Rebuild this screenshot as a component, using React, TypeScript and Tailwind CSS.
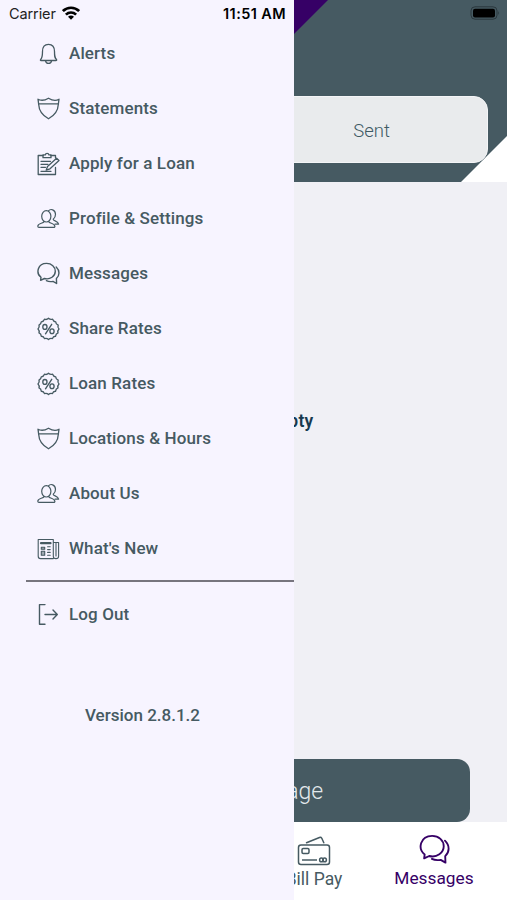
import type { ReactNode } from 'react'

function Icon({ size = 24, stroke = 1.3, children }: { size?: number; stroke?: number; children: ReactNode }) {
  return (
    <svg
      width={size}
      height={size}
      viewBox="0 0 24 24"
      fill="none"
      stroke="currentColor"
      strokeWidth={stroke}
      strokeLinecap="round"
      strokeLinejoin="round"
      className="shrink-0"
    >
      {children}
    </svg>
  )
}

const BellIcon = () => (
  <Icon>
    <path d="M4.6 17.6C6.4 16 6.5 14.5 6.5 9.5C6.5 5 8.5 2.3 12.5 2.3S18.5 5 18.5 9.5C18.5 14.5 18.6 16 20.6 17.6C20.8 18.2 20.5 18.5 20 18.5H5C4.4 18.5 4.2 18.1 4.6 17.6Z" />
    <path d="M9.6 18.8C9.8 20.4 11 21.3 12.5 21.3S15.3 20.4 15.5 18.8" />
  </Icon>
)

const ShieldIcon = () => (
  <Icon>
    <path d="M2 2.2C4.3 3.5 8.5 3.6 12.5 1.2C16.5 3.6 20.8 3.5 23 2.2L22.3 7.5C22 14.5 17.5 19 12.5 21.8C7.5 19 3 14.5 2.7 7.5Z" />
    <path d="M2.7 6.8H22.3" />
  </Icon>
)

const ClipboardIcon = () => (
  <Icon stroke={1.3}>
    <path d="M7.2 3.5H2.2V22.5H19.5V15.5M14.8 3.5H19.5V6" />
    <path d="M7 5.7V2.8H9.3C9.6 .8 12.6 .8 12.9 2.8H15V5.7Z" />
    <path d="M5 9.3H14.5M5 12.3H12M5 15.3H9.5M5 19.3H15" />
    <path d="M11.5 14.5L20.6 6.3L23 8.5L14 16.8L10.2 18.2Z" />
  </Icon>
)

const PeopleIcon = () => (
  <Icon stroke={1.2}>
    <ellipse cx="10.3" cy="9.3" rx="4.6" ry="5.7" />
    <path d="M8 14.5C7.5 16.8 2 15.8 1.8 19.2Q1.8 20.4 3 20.4H17.8Q19 20.4 18.8 19.2C18.4 15.8 13.2 16.8 12.7 14.5" />
    <path d="M12.5 3.8C14.5 1.5 19.3 2.3 19.5 7.3C19.5 9.7 18.5 11.4 17.2 12.3C17.2 14.2 22 13.6 22.6 17.2H19" />
  </Icon>
)

const ChatIcon = ({ size, stroke = 1.4 }: { size?: number; stroke?: number }) => (
  <Icon size={size} stroke={stroke}>
    <path d="M5 15.3C-.4 11.2 1.6 1.4 10.6 1.4C15.6 1.4 19.3 4.8 19.3 9.2C19.3 14.1 14.2 18 8.4 16.5L4.6 18.3Z" />
    <path d="M20.2 5C24 8.6 23.7 13.6 20.4 16.6L20.6 21.5L17 19.4C14.4 19.9 12.2 19.6 10.4 18.7" />
  </Icon>
)

const RatesIcon = () => (
  <Icon stroke={1.35}>
    <path d="M12.5 1.3Q14.3 2.9 16.6 2.2Q17.4 4.4 19.7 4.8Q19.7 7.1 22.2 8.2Q21.2 10.4 23 12Q21.2 13.8 22 15.9Q19.8 16.8 19.5 19.3Q17.2 19.2 16.4 21.6Q14.3 20.8 12.5 22.5Q10.8 20.8 8.5 21.6Q7.7 19.2 5.3 19.3Q5.2 16.8 3 15.9Q3.8 13.8 2 12Q3.8 10.2 3 8.1Q5.2 7 5.3 4.8Q7.6 4.5 8.5 2.2Q10.8 3 12.5 1.3Z" />
    <path d="M15.7 7.3L9.5 16.8" />
    <ellipse cx="8.9" cy="9.9" rx="2.1" ry="2.4" />
    <ellipse cx="16" cy="14.2" rx="2.1" ry="2.4" />
  </Icon>
)

const NewsIcon = () => (
  <Icon stroke={1.1}>
    <path d="M17.3 21.6H4.5C3 21.6 2.2 20.8 2.2 19.3V2.5H17.3V19.2C17.3 22.4 22.6 22.4 22.6 19.2V5.5H17.3M20 5.5V19" />
    <path d="M5 6.2H14.5" strokeWidth="2.2" />
    <path d="M5.3 10.2H8.7V12.2H5.3ZM5.3 14.3H8.7V18.3H5.3Z" fill="currentColor" fillOpacity=".5" />
    <path d="M11.6 9.8H14.2M11.6 12.6H14.2M11.6 15.4H14.2M11.6 18.3H14.2" />
  </Icon>
)

const LogOutIcon = () => (
  <Icon stroke={1.4}>
    <path d="M9 1.6H3.5V21.2H9" />
    <path d="M9 11.5H21M17 7L21.3 11.5L17 16" />
  </Icon>
)

const menu = [
  { icon: BellIcon, label: 'Alerts' },
  { icon: ShieldIcon, label: 'Statements' },
  { icon: ClipboardIcon, label: 'Apply for a Loan' },
  { icon: PeopleIcon, label: 'Profile & Settings' },
  { icon: ChatIcon, label: 'Messages' },
  { icon: RatesIcon, label: 'Share Rates' },
  { icon: RatesIcon, label: 'Loan Rates' },
  { icon: ShieldIcon, label: 'Locations & Hours' },
  { icon: PeopleIcon, label: 'About Us' },
  { icon: NewsIcon, label: "What's New" },
]

function StatusBar() {
  return (
    <div className="absolute inset-x-0 top-0 flex h-7 items-center text-[15px] text-black font-[Inter,sans-serif]">
      <span className="ml-[9px] w-[47px] text-[14.5px] tracking-[-0.1px] text-[#222]">Carrier</span>
      <svg width="18" height="14" viewBox="0 0 18 14" className="ml-[6px] -mt-[2px]" fill="none" stroke="#000" strokeWidth="2.7">
        <path d="M.9 5.1C5.5 .6 12.5 .6 17.1 5.1" />
        <path d="M3.9 8.6C6.8 5.8 11.2 5.8 14.1 8.6" />
        <path d="M9 13.7L6 10.7C7.7 9.2 10.3 9.2 12 10.7Z" fill="#000" stroke="none" />
      </svg>
      <span className="ml-auto mr-[221px] text-[14.5px] font-semibold tracking-[0.4px]">11:51 AM</span>
      <svg width="30" height="14" viewBox="0 0 30 14" className="absolute left-[470px] top-[6px]">
        <rect x="1" y=".8" width="26" height="12.4" rx="4" fill="#465a62" stroke="#2b383e" />
        <rect x="3" y="2.7" width="22" height="8.8" rx="2" fill="#000" />
        <path d="M28.3 5Q30 7 28.3 9Z" fill="#2b383e" />
      </svg>
    </div>
  )
}

function Drawer() {
  return (
    <aside className="absolute inset-y-0 left-0 w-[294px] bg-[#f7f4ff] pt-[26px] text-[#465a62]">
      <nav>
        {menu.map(({ icon: ItemIcon, label }) => (
          <a key={label} className="flex h-[55px] items-center pl-9">
            <ItemIcon />
            <span className="ml-[9px] text-[17px] font-medium tracking-[0.12px] whitespace-nowrap">{label}</span>
          </a>
        ))}
      </nav>
      <div className="ml-[26px] mt-[4px] h-[1.5px] bg-[#77757e]" />
      <a className="mt-[6px] flex h-[55px] items-center pl-9">
        <LogOutIcon />
        <span className="ml-[9px] text-[17px] font-medium tracking-[0.12px]">Log Out</span>
      </a>
      <p className="mt-[60px] pl-[85px] text-[17px] font-medium">Version 2.8.1.2</p>
    </aside>
  )
}

export default function App() {
  return (
    <div className="relative flex h-[900px] w-[507px] flex-col overflow-hidden bg-[#f0f0f5] font-[Roboto,sans-serif]">
      <header className="relative h-[182px] bg-[#465a62] pt-24">
        <svg width="507" height="182" className="absolute inset-0">
          <path d="M0 0H328L146 182H0Z" fill="#360066" />
          <path d="M461 182L507 136V182Z" fill="#fff" />
        </svg>
        <div className="relative ml-5 mr-[19px] flex h-[67px] rounded-[14px] border border-[#f4f5f7] bg-[#e9ebed]">
          <span className="ml-auto mr-[97px] mt-[5px] self-center text-[18.5px] font-light text-[#3e5a64]">Sent</span>
        </div>
      </header>

      <main className="flex flex-1 flex-col items-center">
        <p className="mt-[226px] pl-[2px] text-[17.5px] font-semibold tracking-[0.2px] text-[#17394f]">Inbox is Empty</p>
        <button className="mt-auto h-[63px] w-[433px] rounded-[13px] bg-[#465a62] pr-[4px] pt-[4px] text-[23px] font-light text-[#e3e9ec]">
          New Message
        </button>
      </main>

      <nav className="flex h-[78px] justify-end bg-white">
        <a className="flex w-[120px] flex-col items-center pt-[13px] text-[#465a62]">
          <svg width="34" height="32" viewBox="0 0 34 32" fill="none" stroke="currentColor" strokeWidth="1.5" strokeLinejoin="round">
            <rect x="1.5" y="10" width="31" height="19.5" rx="2.5" />
            <path d="M9.5 7.8L22.5 2.5Q24 2 24.8 3.3L26.8 7.8" strokeLinecap="round" />
            <rect x="5" y="13.5" width="7" height="5" rx="1.2" />
            <path d="M5 25H20" />
            <circle cx="24.4" cy="24.9" r="1.8" />
            <circle cx="27.6" cy="24.9" r="1.8" />
          </svg>
          <span className="text-[17.5px] leading-6">Bill Pay</span>
        </a>
        <a className="mr-[13px] flex w-[120px] flex-col items-center pt-[12px] text-[#360066]">
          <ChatIcon size={32} stroke={1.4} />
          <span className="text-[17.3px] leading-6">Messages</span>
        </a>
      </nav>

      <Drawer />
      <StatusBar />
    </div>
  )
}
